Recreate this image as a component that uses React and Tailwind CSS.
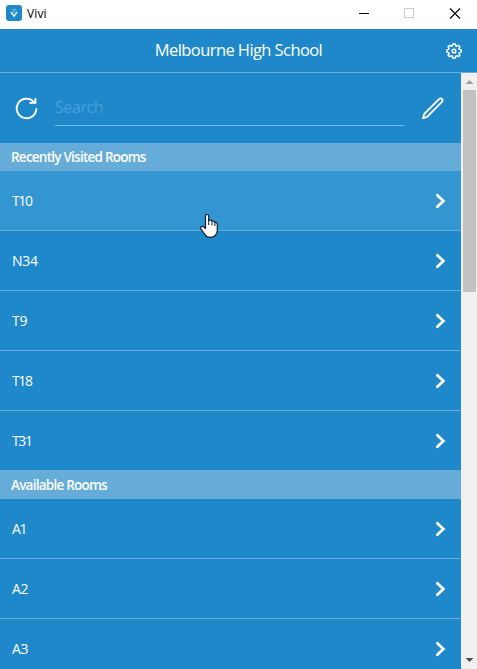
import React from "react";

const recentRooms = ["T10", "N34", "T9", "T18", "T31"];
const availableRooms = ["A1", "A2", "A3"];

function Chevron() {
  return (
    <svg className="mr-[15px] h-4 w-[10px] shrink-0" viewBox="0 0 10 16" fill="none" stroke="#fff" strokeWidth="2.7">
      <path d="M1.3 2.2 L7.4 8 L1.3 13.8" strokeLinecap="round" strokeLinejoin="miter" />
    </svg>
  );
}

function Room({ name, hovered, last }) {
  // The digit 1 has wide side bearings, so names that hold it are set tighter.
  const tracking = name.includes("1") ? "tracking-[-1.4px]" : "tracking-[-0.3px]";
  return (
    <div
      className={`flex h-[60px] shrink-0 items-center justify-between border-b pl-3 ${
        last ? "border-transparent" : "border-[#65acd9]"
      } ${hovered ? "bg-[#3395d1]" : ""}`}
    >
      <span className={`mt-px text-[14px] font-medium leading-5 ${tracking}`}>{name}</span>
      <Chevron />
    </div>
  );
}

function TitleBar() {
  return (
    <div className="flex h-[29px] shrink-0 items-center bg-white pl-[6px] text-black">
      <svg className="mb-[3px] h-4 w-4" viewBox="0 0 16 16" fill="none">
        <rect width="16" height="16" rx="3" fill="#1f88cb" />
        <path d="M5 7 L8 11.2 L11 7" stroke="#e8f4fc" strokeWidth="1.4" />
        <path d="M5.8 5 Q8 3.2 10.2 5" stroke="#8fc5e8" strokeWidth="0.9" />
        <circle cx="8" cy="6.6" r="0.8" fill="#b9dcf2" />
      </svg>
      <span className="mb-[2px] ml-[5px] text-[12px] leading-4 tracking-[0.1px]">Vivi</span>
      <div className="mb-[3px] ml-auto flex items-center">
        <svg className="h-3 w-[118px]" viewBox="0 0 118 12" fill="none" shapeRendering="crispEdges">
          <path d="M0 6.5 H10" stroke="#000" />
          <rect x="45.5" y="1.5" width="9" height="9" stroke="#ccc" />
          <path d="M91 1.5 L101 11.5 M101 1.5 L91 11.5" stroke="#000" strokeWidth="1.1" shapeRendering="auto" />
        </svg>
      </div>
    </div>
  );
}

function Gear() {
  return (
    <svg className="h-4 w-4" viewBox="0 0 16 16" fill="none" stroke="#fff" strokeWidth="1.5" strokeLinejoin="round">
      <path d="M6.8 1 H9.2 L9.7 2.8 L10.8 3.2 L12.4 2.3 L13.9 3.8 L13 5.3 L13.4 6.4 L15.2 6.9 V9.1 L13.4 9.6 L13 10.7 L13.9 12.2 L12.4 13.7 L10.8 12.8 L9.7 13.2 L9.2 15 H6.8 L6.3 13.2 L5.2 12.8 L3.6 13.7 L2.1 12.2 L3 10.7 L2.6 9.6 L0.8 9.1 V6.9 L2.6 6.4 L3 5.3 L2.1 3.8 L3.6 2.3 L5.2 3.2 L6.3 2.8 Z" />
      <circle cx="8" cy="8" r="1.8" />
    </svg>
  );
}

function Scrollbar() {
  return (
    <div className="flex w-4 shrink-0 flex-col items-center bg-[#f0f0f0]">
      <svg className="h-[17px] w-4 shrink-0" viewBox="0 0 16 17">
        <path d="M4.5 11 L8.5 7 L12.5 11 Z" fill="#a0a0a0" />
      </svg>
      <div className="ml-px h-[202px] w-[13px] shrink-0 bg-[#c1c1c1]" />
      <svg className="mt-auto h-[17px] w-4 shrink-0" viewBox="0 0 16 17">
        <path d="M4.5 6 H12.5 L8.5 10 Z" fill="#505050" />
      </svg>
    </div>
  );
}

export default function App() {
  return (
    <div className="relative flex h-[669px] w-[477px] flex-col overflow-hidden bg-[#1f88cb] font-['Open_Sans','Noto_Sans',sans-serif] text-white">
      <TitleBar />
      <header className="flex h-11 shrink-0 items-center border-b border-[#65acd9] pr-[15px] pl-[31px]">
        <h1 className="mb-[2px] flex-1 text-center text-[16.5px] leading-6 tracking-[-0.58px]">Melbourne High School</h1>
        <Gear />
      </header>
      <div className="flex min-h-0 flex-1">
        <main className="flex min-w-0 flex-1 flex-col overflow-hidden">
          <div className="flex h-[70px] shrink-0 items-center pr-4 pl-[15px]">
            <svg className="h-6 w-6 shrink-0" viewBox="0 0 24 24" fill="none" stroke="#fff" strokeWidth="1.9">
              <path d="M21.3 12.2 A9.8 9.8 0 1 1 18.7 5.8 L20.8 7" />
              <path d="M20.4 2 V6.9 H14.4" />
            </svg>
            <div className="mb-px ml-4 flex h-9 w-[349px] items-center border-b border-[#79b9e4]">
              <span className="text-[16px] leading-6 tracking-[-0.4px] text-[#479fd8]">Search</span>
            </div>
            <svg className="ml-auto h-6 w-6 shrink-0" viewBox="0 0 24 24" fill="none" stroke="#fff" strokeWidth="1.8" strokeLinejoin="round">
              <path d="M2 22.2 L3.2 18 L18.3 2.9 Q19.8 1.8 21 3 Q22.3 4.2 21.2 5.7 L6.1 20.8 Z" />
            </svg>
          </div>
          <h2 className="flex h-7 shrink-0 items-center bg-[#65acd9] pl-[11px] text-[13.5px] font-semibold leading-5 tracking-[-0.76px]">
            Recently Visited Rooms
          </h2>
          {recentRooms.map((room, i) => (
            <Room key={room} name={room} hovered={i === 0} last={i === recentRooms.length - 1} />
          ))}
          <h2 className="-mt-px flex h-[29px] shrink-0 items-center bg-[#65acd9] pt-px pl-[11px] text-[13.5px] font-semibold leading-5 tracking-[-0.76px]">
            Available Rooms
          </h2>
          {availableRooms.map((room) => (
            <Room key={room} name={room} />
          ))}
        </main>
        <Scrollbar />
      </div>
      <svg className="absolute top-[213px] left-[199px] h-[26px] w-5" viewBox="0 0 20 26" fill="#fff" stroke="#101c30" strokeWidth="1.2" strokeLinejoin="round">
        <path d="M6.5 15.5 V3.3 Q6.5 1.5 8.1 1.5 Q9.7 1.5 9.7 3.3 V7.5 Q12.6 6.4 13 8.3 Q15.5 7.5 15.8 9.5 Q18.3 9 18.3 11.2 V17 Q18.3 20.5 16.5 22 Q15 24.4 11.5 24.4 Q7.5 24.4 6 21.5 L2 16.2 Q1 14.2 2.4 13.5 Q4.2 12.7 6.5 15.5 Z" />
        <path d="M9.7 7.5 V12 M13 8.5 V12.5 M15.9 9.7 V13" strokeWidth="1" />
      </svg>
    </div>
  );
}
